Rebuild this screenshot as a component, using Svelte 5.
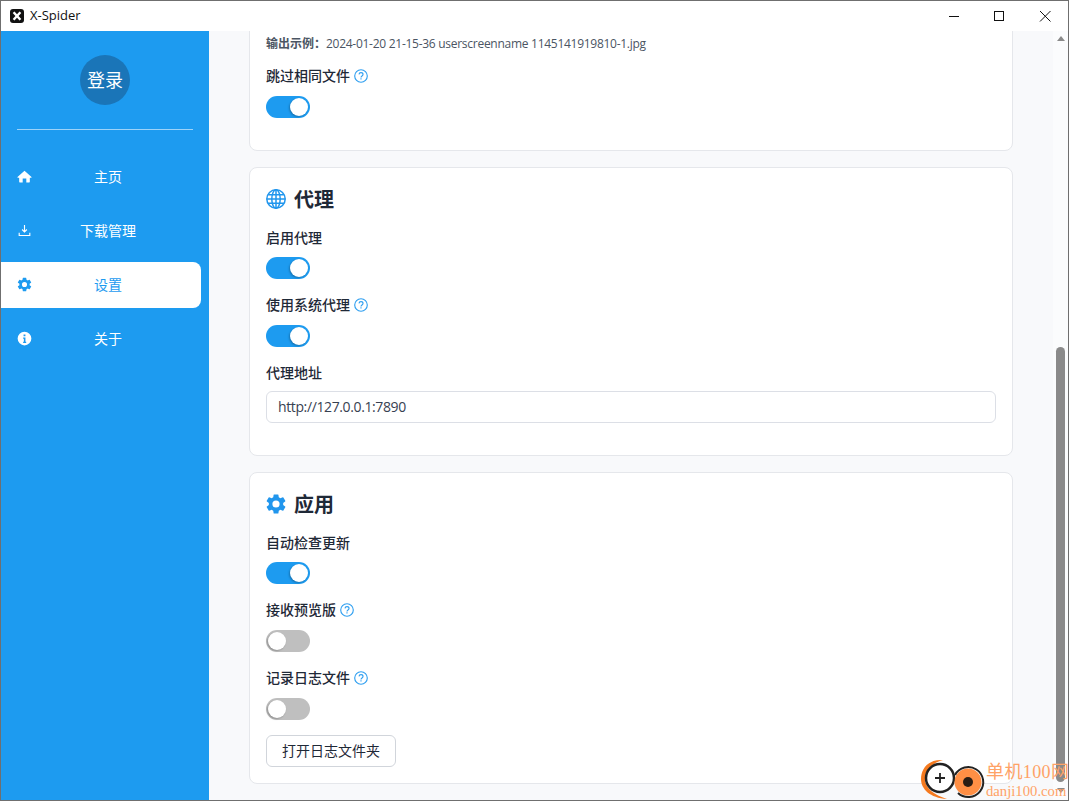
<script>
const nav = [
  { label: '主页', icon: 'home' },
  { label: '下载管理', icon: 'download' },
  { label: '设置', icon: 'gear', active: true },
  { label: '关于', icon: 'info' }
]

const gear = 'M19.14 12.94a7.1 7.1 0 0 0 0-1.88l2.03-1.58a.5.5 0 0 0 .12-.61l-1.92-3.32a.5.5 0 0 0-.59-.22l-2.39.96a7 7 0 0 0-1.62-.94l-.36-2.54a.5.5 0 0 0-.48-.41h-3.84a.5.5 0 0 0-.47.41l-.36 2.54a7.3 7.3 0 0 0-1.62.94l-2.39-.96a.5.5 0 0 0-.59.22L2.74 8.87a.5.5 0 0 0 .12.61l2.03 1.58a7.4 7.4 0 0 0 0 1.88l-2.03 1.58a.5.5 0 0 0-.12.61l1.92 3.32c.12.22.37.29.59.22l2.39-.96c.5.38 1.03.7 1.62.94l.36 2.54c.05.24.24.41.48.41h3.84c.24 0 .44-.17.47-.41l.36-2.54a7 7 0 0 0 1.62-.94l2.39.96c.22.08.47 0 .59-.22l1.92-3.32a.5.5 0 0 0-.12-.61zM12 15.6a3.6 3.6 0 1 1 0-7.2 3.6 3.6 0 0 1 0 7.2z'
</script>

{#snippet help()}
  <svg class='help' viewBox='0 0 16 16'>
    <circle cx='8' cy='8' r='7.200' />
    <path d='M5.700 6.200A2.300 2.300 0 0 1 8 4.200c1.300 0 2.300.9 2.300 2.100 0 1.700-2.300 1.700-2.300 3.300' />
    <path d='M8 10.600v1.300' />
  </svg>
{/snippet}

{#snippet toggle(on)}
  <div class='toggle' class:on><span class='knob'></span></div>
{/snippet}

<div class='window'>
  <header class='title-bar'>
    <svg class='logo' viewBox='0 0 14 14'>
      <rect width='14' height='14' rx='3' fill='#111' />
      <path d='M3.600 3.200 10.400 10.800M10.400 3.200 3.600 10.800' stroke='#fff' stroke-width='2.400' />
    </svg>
    <span class='app-name'>X-Spider</span>
    <div class='controls'>
      <svg viewBox='0 0 46 30'><path d='M19 15.500h10' /></svg>
      <svg viewBox='0 0 46 30'><rect x='18.500' y='10.500' width='9' height='9' /></svg>
      <svg viewBox='0 0 46 30'><path d='M18 10l10.500 10.500M28.500 10 18 20.500' /></svg>
    </div>
  </header>

  <div class='body'>
    <aside class='sidebar'>
      <div class='avatar'>登录</div>
      <div class='divider'></div>
      <nav>
        {#each nav as item}
          <div class='nav-item' class:active={item.active}>
            {#if item.icon === 'gear'}
              <svg class='nav-icon' viewBox='1.500 1.500 21 21'><path d={gear} /></svg>
            {:else}
              <svg class='nav-icon' viewBox='0 0 24 24'>
                {#if item.icon === 'home'}
                  <path d='M12 2.600 0.800 12.800c-.4.4-.1 1 .4 1H3.500v6.700c0 .5.400.9.900.9h4.700v-6.100h5.800v6.100h4.700c.5 0 .9-.4.900-.9v-6.700h2.300c.5 0 .8-.6.400-1z' />
                {:else if item.icon === 'download'}
                  <path class='line' d='M12 3v11M8.200 10.400 12 14.200l3.800-3.800M3.500 15.500v4.500h17v-4.500' />
                {:else}
                  <path fill-rule='evenodd' d='M12 1a11 11 0 1 0 0 22 11 11 0 0 0 0-22zM10.500 5.500h3v3h-3zM9.800 10.500h3.700v6.500h1.200v2H9.800v-2H11v-4.500H9.800z' />
                {/if}
              </svg>
            {/if}
            <span>{item.label}</span>
          </div>
        {/each}
      </nav>
    </aside>

    <main class='content'>
      <div class='cards'>
        <section class='card first'>
          <p class='example'><b>输出示例：</b>2024-01-20 21-15-36 userscreenname 1145141919810-1.jpg</p>
          <div class='label has-help'>跳过相同文件 {@render help()}</div>
          {@render toggle(true)}
        </section>

        <section class='card'>
          <h2>
            <svg class='head-icon' viewBox='0 0 20 20'>
              <g fill='none' stroke='#2196ed' stroke-width='1.500'>
                <circle cx='10' cy='10' r='9.200' />
                <ellipse cx='10' cy='10' rx='4.200' ry='9.200' />
                <path d='M10 .8v18.400M.8 10h18.400M2.200 5.800h15.600M2.200 14.200h15.600' />
              </g>
            </svg>
            代理
          </h2>
          <div class='label'>启用代理</div>
          {@render toggle(true)}
          <div class='label has-help'>使用系统代理 {@render help()}</div>
          {@render toggle(true)}
          <div class='label addr'>代理地址</div>
          <div class='input'>http://127.0.0.1:7890</div>
        </section>

        <section class='card'>
          <h2>
            <svg class='head-icon' viewBox='2.500 2 19 20'><path fill='#2196ed' d={gear} /></svg>
            应用
          </h2>
          <div class='label'>自动检查更新</div>
          {@render toggle(true)}
          <div class='label has-help'>接收预览版 {@render help()}</div>
          {@render toggle(false)}
          <div class='label has-help'>记录日志文件 {@render help()}</div>
          {@render toggle(false)}
          <button class='btn'>打开日志文件夹</button>
        </section>
      </div>

      <div class='scrollbar'>
        <span class='arrow up'></span>
        <div class='thumb'></div>
        <span class='arrow down'></span>
      </div>
    </main>
  </div>

  <div class='watermark'>
    <svg class='wm-logo' viewBox='0 0 68 46'>
      <path d='M25 5C10 4 3 14 3 24c0 10 9 19 26 20C16 40 7 33 7 24c0-9 7-16 18-19z' fill='#f57a1f' />
      <circle cx='22' cy='23' r='14' fill='#fff' stroke='#222' stroke-width='2.500' />
      <path d='M22 18v10M17 23h10' stroke='#222' stroke-width='1.800' />
      <circle cx='50' cy='27' r='13.500' fill='#ff8f45' />
      <path d='M37 20a15 15 0 1 1 3 18' fill='none' stroke='#222' stroke-width='2' />
      <circle cx='50' cy='27' r='5' fill='#2a1d14' />
    </svg>
    <div class='wm-text'>
      <div class='wm-cn'>单机100网</div>
      <div class='wm-en'>danji100.com</div>
    </div>
  </div>
</div>

<style>
  :global(body) {
    margin: 0;
    overflow: hidden;
    font-family: 'Open Sans', 'Noto Sans CJK SC', sans-serif;
  }
  .window {
    position: relative;
    box-sizing: border-box;
    width: 1069px;
    height: 801px;
    border: 1px solid #6f6f6f;
    display: flex;
    flex-direction: column;
    overflow: hidden;
    background: #fff;
  }
  .title-bar {
    height: 30px;
    flex: none;
    display: flex;
    align-items: center;
    padding-left: 9px;
    background: #fff;
  }
  .logo {
    width: 14px;
    height: 14px;
  }
  .app-name {
    margin-left: 6px;
    padding-bottom: 2px;
    font-size: 13px;
    color: #111;
  }
  .controls {
    margin-left: auto;
    display: flex;
  }
  .controls svg {
    width: 46px;
    height: 30px;
    fill: none;
    stroke: #111;
    stroke-width: 1;
  }
  .body {
    flex: 1;
    display: flex;
    min-height: 0;
  }
  .sidebar {
    width: 208px;
    flex: none;
    background: #1d9bf0;
    display: flex;
    flex-direction: column;
    align-items: center;
    padding-top: 24px;
    box-sizing: border-box;
  }
  .avatar {
    width: 50px;
    height: 50px;
    border-radius: 50%;
    background: #1a75b8;
    color: #fff;
    font-size: 18px;
    padding-bottom: 2px;
    box-sizing: border-box;
    display: flex;
    align-items: center;
    justify-content: center;
  }
  .divider {
    width: 176px;
    height: 1px;
    background: #9dd3f9;
    margin-top: 24px;
    margin-left: -1px;
  }
  nav {
    width: 100%;
    margin-top: 24px;
    display: flex;
    flex-direction: column;
    gap: 8px;
  }
  .nav-item {
    width: 200px;
    height: 46px;
    display: flex;
    align-items: center;
    padding: 0 17px 1px 16px;
    box-sizing: border-box;
    color: #fff;
    font-size: 14px;
    border-radius: 0 8px 8px 0;
  }
  .nav-item span {
    flex: 1;
    text-align: center;
    padding-bottom: 1px;
  }
  .nav-icon {
    width: 15px;
    height: 15px;
    flex: none;
    fill: currentColor;
  }
  .nav-icon .line {
    fill: none;
    stroke: currentColor;
    stroke-width: 1.800;
  }
  .nav-item.active {
    background: #fff;
    color: #1d9bf0;
  }
  .content {
    flex: 1;
    min-width: 0;
    display: flex;
    overflow: hidden;
    background: #f8f9fb;
  }
  .cards {
    flex: 1;
    min-width: 0;
    padding: 0 40px;
    display: flex;
    flex-direction: column;
    gap: 16px;
  }
  .card {
    background: #fff;
    border: 1px solid #e5e7eb;
    border-radius: 8px;
    padding: 16px;
    color: #1f2937;
    display: flex;
    flex-direction: column;
    align-items: flex-start;
    flex: none;
  }
  .card.first {
    margin-top: -13px;
    padding-bottom: 32px;
  }
  .example {
    margin: 0 0 12px;
    font-size: 12px;
    line-height: 18px;
    color: #4b5563;
    letter-spacing: -0.275px;
  }
  .example b {
    font-weight: 600;
    letter-spacing: 0;
  }
  h2 {
    margin: 0 0 14px;
    height: 30px;
    padding-bottom: 2px;
    box-sizing: border-box;
    display: flex;
    align-items: center;
    gap: 8px;
    font-size: 20px;
    font-weight: 700;
    color: #1f2937;
  }
  .head-icon {
    width: 20px;
    height: 20px;
    margin-top: 2px;
  }
  .label {
    display: flex;
    align-items: center;
    gap: 4px;
    height: 20px;
    box-sizing: border-box;
    padding-bottom: 2px;
    font-size: 14px;
    font-weight: 500;
    margin-bottom: 9px;
  }
  .label.has-help {
    height: 22px;
  }
  .label.addr {
    padding: 1px 0;
  }
  .help {
    width: 14px;
    height: 14px;
    margin-top: 2px;
    fill: none;
    stroke: #2f9ff0;
    stroke-width: 1.300;
  }
  .toggle {
    width: 44px;
    height: 22px;
    border-radius: 11px;
    background: #bfbfbf;
    position: relative;
    margin-bottom: 15px;
  }
  .toggle.on {
    background: #1d9bf0;
  }
  .knob {
    position: absolute;
    top: 2px;
    left: 2px;
    width: 18px;
    height: 18px;
    border-radius: 50%;
    background: #fff;
    box-shadow: -1px 1px 2px rgba(0, 0, 0, 0.25);
  }
  .toggle.on .knob {
    left: 24px;
  }
  .first .toggle {
    margin-bottom: 0;
  }
  .input {
    box-sizing: border-box;
    width: 100%;
    height: 32px;
    border: 1px solid #dcdfe6;
    border-radius: 6px;
    padding: 0 11px;
    font-size: 14px;
    line-height: 30px;
    letter-spacing: -0.38px;
    color: #374151;
    margin-bottom: 16px;
  }
  .btn {
    width: 130px;
    height: 32px;
    background: #fff;
    border: 1px solid #d1d5db;
    border-radius: 6px;
    font: inherit;
    font-size: 14px;
    color: #1f2937;
    padding: 0 0 2px;
  }
  .scrollbar {
    width: 15px;
    flex: none;
    background: #fbfcfd;
    display: flex;
    flex-direction: column;
    align-items: center;
    padding-top: 5px;
  }
  .arrow {
    width: 0;
    height: 0;
    border-left: 4px solid transparent;
    border-right: 4px solid transparent;
    flex: none;
  }
  .arrow.up {
    border-bottom: 5px solid #8a8a8a;
  }
  .arrow.down {
    border-top: 5px solid #8a8a8a;
    margin-top: 6px;
  }
  .thumb {
    width: 9px;
    height: 435px;
    background: #8a8a8a;
    border-radius: 5px;
    margin-top: 306px;
  }
  .watermark {
    position: absolute;
    left: 917px;
    bottom: -8px;
    display: flex;
    align-items: flex-end;
  }
  .wm-logo {
    width: 68px;
    height: 46px;
    flex: none;
    margin-bottom: 7px;
  }
  .wm-text {
    font-family: 'Liberation Serif', 'Noto Sans CJK SC', serif;
    color: #ffa266;
    line-height: 1;
    margin-bottom: 9px;
  }
  .wm-cn {
    font-size: 18px;
    letter-spacing: 0.4px;
    white-space: nowrap;
  }
  .wm-en {
    font-size: 14.700px;
    margin-top: 3px;
    white-space: nowrap;
  }
</style>
